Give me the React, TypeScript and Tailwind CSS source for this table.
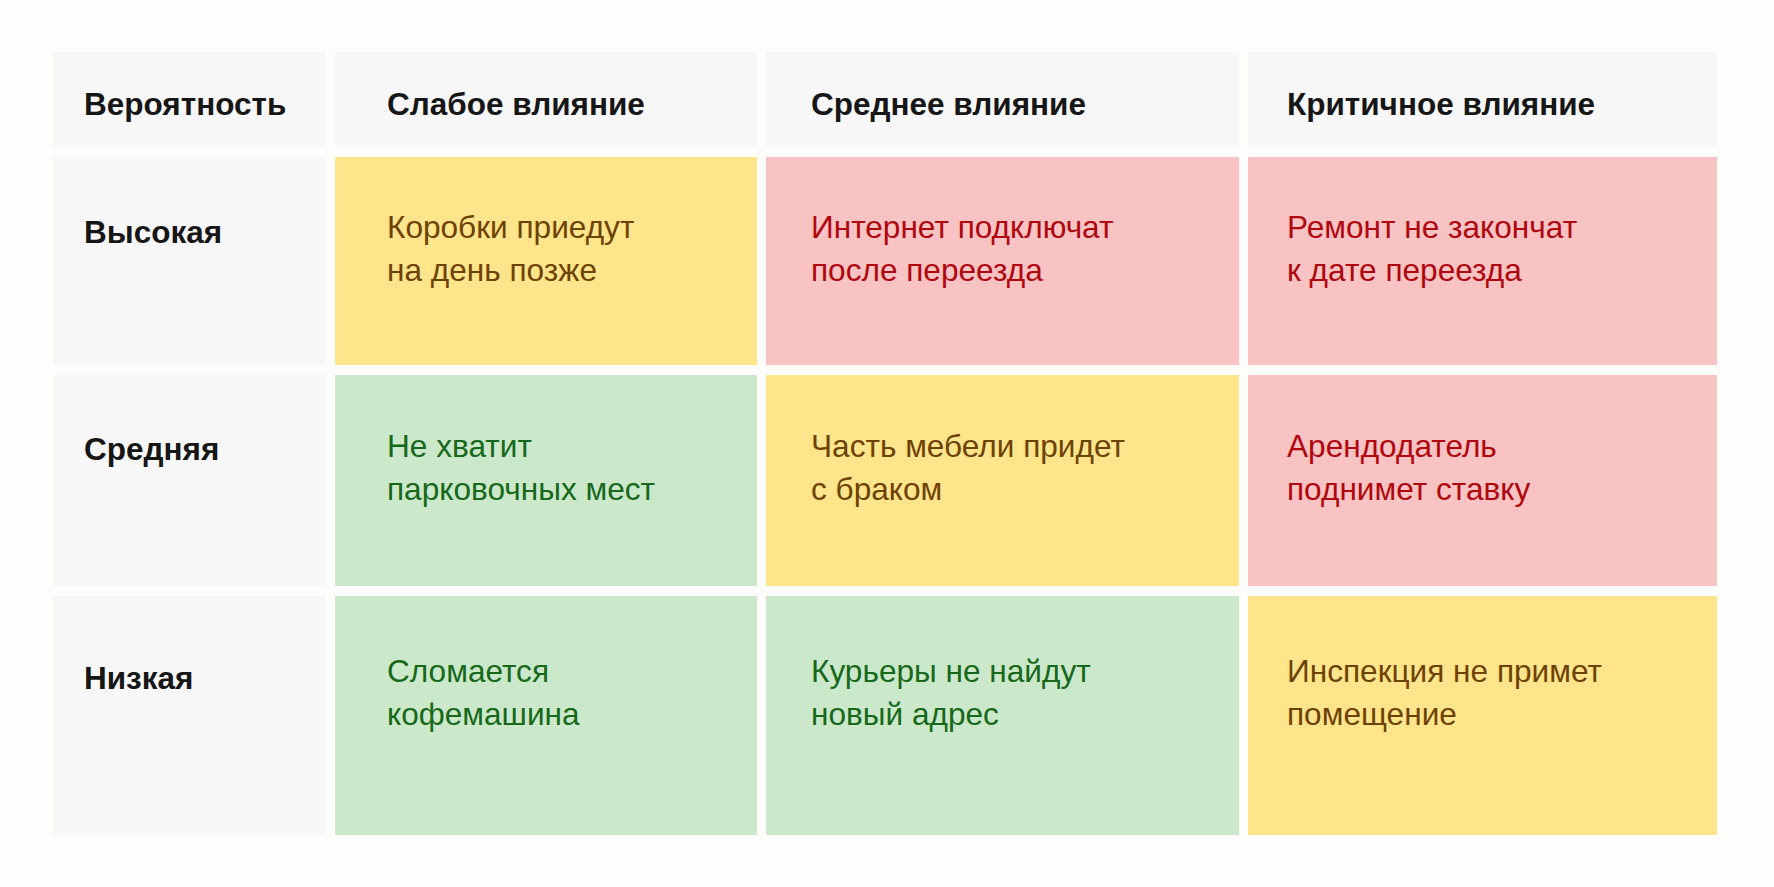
import React from "react";

type Tone = "y" | "r" | "g";

const toneCls: Record<Tone, string> = {
  y: "bg-[#fee58b] text-[#6e4205]",
  r: "bg-[#f9c3c3] text-[#b0060e]",
  g: "bg-[#cce8cb] text-[#16691a]",
};

const colPad = ["pl-[31px]", "pl-[52px]", "pl-[45px]", "pl-[39px]"];

const rows: {
  label: string;
  labelPt: string;
  bodyPt: string;
  cells: { tone: Tone; l1: string; l2: string }[];
}[] = [
  {
    label: "Высокая",
    labelPt: "pt-[54px]",
    bodyPt: "pt-[49px]",
    cells: [
      { tone: "y", l1: "Коробки приедут", l2: "на день позже" },
      { tone: "r", l1: "Интернет подключат", l2: "после переезда" },
      { tone: "r", l1: "Ремонт не закончат", l2: "к дате переезда" },
    ],
  },
  {
    label: "Средняя",
    labelPt: "pt-[53px]",
    bodyPt: "pt-[50px]",
    cells: [
      { tone: "g", l1: "Не хватит", l2: "парковочных мест" },
      { tone: "y", l1: "Часть мебели придет", l2: "с браком" },
      { tone: "r", l1: "Арендодатель", l2: "поднимет ставку" },
    ],
  },
  {
    label: "Низкая",
    labelPt: "pt-[61px]",
    bodyPt: "pt-[54px]",
    cells: [
      { tone: "g", l1: "Сломается", l2: "кофемашина" },
      { tone: "g", l1: "Курьеры не найдут", l2: "новый адрес" },
      { tone: "y", l1: "Инспекция не примет", l2: "помещение" },
    ],
  },
];

const headers = ["Вероятность", "Слабое влияние", "Среднее влияние", "Критичное влияние"];

export default function App() {
  return (
    <div
      className="w-[1774px] h-[887px] bg-[#fdfdfc] pl-[53px] pt-[52px] overflow-hidden"
      style={{ fontFamily: '"Liberation Sans", Arial, sans-serif' }}
    >
      <div className="grid grid-cols-[273px_422px_473px_469px] grid-rows-[95px_208px_211px_239px] gap-x-[9px] gap-y-[10px]">
        {headers.map((h, i) => (
          <div
            key={h}
            className={`bg-[#f7f7f7] ${colPad[i]} pt-[31px] text-[31.5px] leading-[43px] font-bold text-[#161616]`}
          >
            {h}
          </div>
        ))}
        {rows.map((r) => (
          <React.Fragment key={r.label}>
            <div
              className={`bg-[#f7f7f7] ${colPad[0]} ${r.labelPt} text-[31.5px] leading-[43px] font-bold text-[#161616]`}
            >
              {r.label}
            </div>
            {r.cells.map((c, i) => (
              <div
                key={c.l1}
                className={`${toneCls[c.tone]} ${colPad[i + 1]} ${r.bodyPt} text-[31.6px] leading-[43px]`}
              >
                <div>{c.l1}</div>
                <div>{c.l2}</div>
              </div>
            ))}
          </React.Fragment>
        ))}
      </div>
    </div>
  );
}
